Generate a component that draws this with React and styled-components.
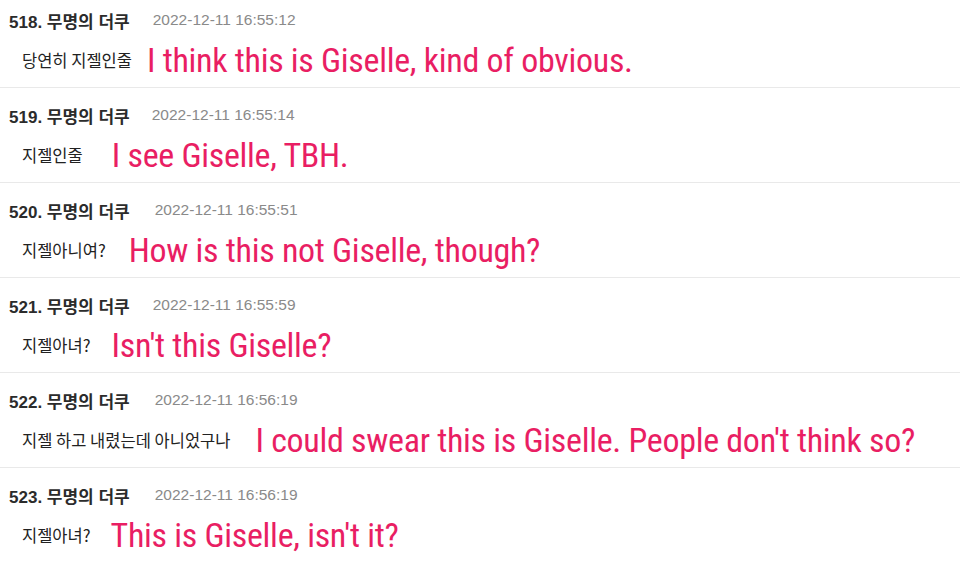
import React from "react";
import styled, { createGlobalStyle } from "styled-components";

const Global = createGlobalStyle`
  html, body { margin: 0; padding: 0; background: #fff; }
  body { font-family: "Liberation Sans", "Noto Sans CJK KR", sans-serif; }
`;

const List = styled.div`
  display: flex;
  flex-direction: column;
  width: 960px;
  height: 561px;
  overflow: hidden;
`;

const Row = styled.div`
  display: flex;
  flex-direction: column;
  gap: 10px;
  padding: ${(p) => (p.$first ? "10px" : "17px")} 0 7px;
  border-bottom: 1px solid #e9e9e9;
`;

const Header = styled.div`
  display: flex;
  align-items: center;
  height: 20px;
  padding-left: 9px;
  gap: ${(p) => p.$gap}px;
`;

const Name = styled.span`
  font-family: "Liberation Sans", "Noto Sans CJK KR", sans-serif;
  font-weight: 700;
  font-size: 17px;
  color: #2b2b2b;
  white-space: nowrap;
`;

const Stamp = styled.span`
  font-family: "Liberation Sans", "Noto Sans CJK KR", sans-serif;
  font-size: 15.5px;
  color: #8a8a8a;
  white-space: nowrap;
`;

const Body = styled.div`
  display: flex;
  align-items: center;
  height: 40px;
  padding-left: 22px;
  gap: ${(p) => p.$gap}px;
`;

const Comment = styled.span`
  font-family: "Noto Sans CJK KR", sans-serif;
  font-size: 16.5px;
  color: #222;
  white-space: nowrap;
`;

const Caption = styled.span`
  font-family: "Roboto Condensed", "Roboto", sans-serif;
  font-size: 34px;
  letter-spacing: -0.3px;
  color: #e91e63;
  white-space: nowrap;
  line-height: 40px;
`;

const rows = [
  { no: 518, time: "2022-12-11 16:55:12", text: "당연히 지젤인줄", en: "I think this is Giselle, kind of obvious.", hg: 23, bg: 15 },
  { no: 519, time: "2022-12-11 16:55:14", text: "지젤인줄", en: "I see Giselle, TBH.", hg: 22, bg: 29 },
  { no: 520, time: "2022-12-11 16:55:51", text: "지젤아니여?", en: "How is this not Giselle, though?", hg: 25, bg: 23 },
  { no: 521, time: "2022-12-11 16:55:59", text: "지젤아녀?", en: "Isn't this Giselle?", hg: 23, bg: 21 },
  { no: 522, time: "2022-12-11 16:56:19", text: "지젤 하고 내렸는데 아니었구나", en: "I could swear this is Giselle. People don't think so?", hg: 25, bg: 25 },
  { no: 523, time: "2022-12-11 16:56:19", text: "지젤아녀?", en: "This is Giselle, isn't it?", hg: 25, bg: 20 },
];

export default function App() {
  return (
    <>
      <Global />
      <List>
        {rows.map((r, i) => (
          <Row key={r.no} $first={i === 0}>
            <Header $gap={r.hg}>
              <Name>{r.no}. 무명의 더쿠</Name>
              <Stamp>{r.time}</Stamp>
            </Header>
            <Body $gap={r.bg}>
              <Comment>{r.text}</Comment>
              <Caption>{r.en}</Caption>
            </Body>
          </Row>
        ))}
      </List>
    </>
  );
}
